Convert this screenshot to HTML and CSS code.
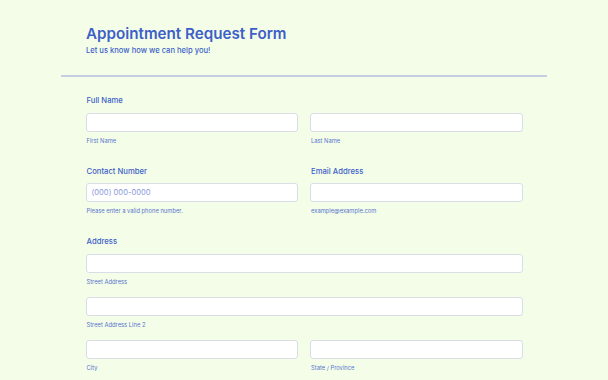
FILE: index.html
```html
<!DOCTYPE html>
<html lang="en">
<head>
    <meta charset="UTF-8">
    <meta name="viewport" content="width=device-width, initial-scale=1.0">
    <title>Appointment Request Form</title>
    <link rel="stylesheet" href="styles.css">
</head>
<body>
    <div class="form-wrap">
        <header class="form-header">
            <h1>Appointment Request Form</h1>
            <p>Let us know how we can help you!</p>
        </header>

        <form class="form-body">
            <!-- Full name -->
            <div class="field">
                <label class="field-label">Full Name</label>
                <div class="row">
                    <div class="col">
                        <input type="text">
                        <span class="sub">First Name</span>
                    </div>
                    <div class="col">
                        <input type="text">
                        <span class="sub">Last Name</span>
                    </div>
                </div>
            </div>

            <!-- Contact / email -->
            <div class="row field">
                <div class="col">
                    <label class="field-label">Contact Number</label>
                    <input type="text" placeholder="(000) 000-0000">
                    <span class="sub">Please enter a valid phone number.</span>
                </div>
                <div class="col">
                    <label class="field-label">Email Address</label>
                    <input type="email">
                    <span class="sub">example@example.com</span>
                </div>
            </div>

            <!-- Address -->
            <div class="field">
                <label class="field-label">Address</label>
                <div class="col">
                    <input type="text">
                    <span class="sub">Street Address</span>
                </div>
                <div class="col spaced">
                    <input type="text">
                    <span class="sub">Street Address Line 2</span>
                </div>
                <div class="row spaced">
                    <div class="col">
                        <input type="text">
                        <span class="sub">City</span>
                    </div>
                    <div class="col">
                        <input type="text">
                        <span class="sub">State / Province</span>
                    </div>
                </div>
            </div>
        </form>
    </div>
</body>
</html>
```

FILE: styles.css
```css
body {
    margin: 0;
    padding: 0;
    background: #f3fde8;
    font-family: Inter, "Noto Sans", Arial, sans-serif;
    color: #3e5fc8;
}

.form-wrap {
    width: 486px;
    margin-left: 61px;
}

.form-header {
    padding: 25px 25px 19px;
    border-bottom: 2px solid #c6cde0;
}

.form-header h1 {
    margin: 0;
    font-size: 15.2px;
    line-height: 18px;
    font-weight: 600;
}

.form-header p {
    margin: 3px 0 0;
    font-size: 7.6px;
    line-height: 10px;
    font-weight: 500;
}

.form-body {
    padding: 19px 24.5px 0;
}

.field {
    margin-bottom: 22px;
}

.field-label {
    display: block;
    font-size: 7.7px;
    line-height: 10px;
    font-weight: 500;
    padding-left: 1px;
    margin-bottom: 6.5px;
}

.row {
    display: flex;
    gap: 12px;
}

.col {
    flex: 1;
    display: flex;
    flex-direction: column;
}

.spaced {
    margin-top: 11px;
}

input {
    box-sizing: border-box;
    width: 100%;
    height: 19px;
    margin: 0;
    padding: 0 5px;
    background: #fff;
    border: 1px solid #d9dee6;
    border-radius: 3px;
    font-family: inherit;
    font-size: 7.6px;
    color: #3e5fc8;
}

input::placeholder {
    color: #8a9bd8;
}

.sub {
    font-size: 5.8px;
    line-height: 8px;
    margin-top: 5px;
    padding-left: 1px;
    color: #5a74cf;
}
```
